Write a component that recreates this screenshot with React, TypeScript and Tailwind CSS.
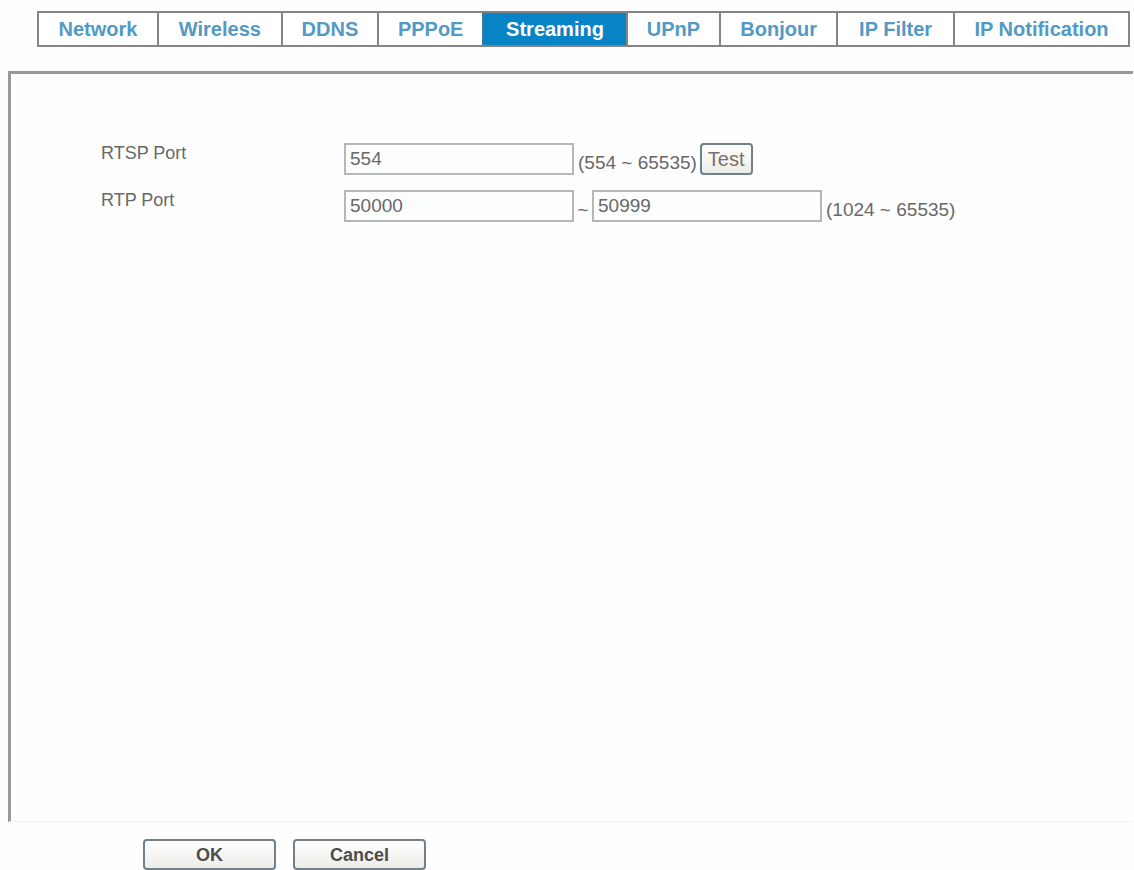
import clsx from 'clsx';

// grow sets each tab's share of the bar
const tabs = [
  { label: 'Network', grow: 'grow-[120]' },
  { label: 'Wireless', grow: 'grow-[124]' },
  { label: 'DDNS', grow: 'grow-[96]' },
  { label: 'PPPoE', grow: 'grow-[105]' },
  { label: 'Streaming', grow: 'grow-[144]', active: true },
  { label: 'UPnP', grow: 'grow-[93]' },
  { label: 'Bonjour', grow: 'grow-[117]' },
  { label: 'IP Filter', grow: 'grow-[117]' },
  { label: 'IP Notification', grow: 'grow-[176]' },
];

const inputClass =
  'h-8 w-[230px] border-2 border-[#b4b8b8] bg-[#fcfefe] px-1 text-[19px] text-[#686868] outline-none';

const buttonClass =
  'rounded-sm border-2 border-[#71808a] bg-gradient-to-b from-white to-[#ecece8]';

function TabBar() {
  return (
    <nav className="ml-[37px] mr-[4px] flex border-2 border-[#858585] bg-white">
      {tabs.map((tab, index) => (
        <a
          key={tab.label}
          href="#"
          aria-current={tab.active ? 'page' : undefined}
          className={clsx(
            'basis-0 whitespace-nowrap text-center text-xl font-bold leading-8',
            tab.grow,
            index > 0 && 'border-l-2',
            tab.active
              ? 'border-[#3f7898] bg-[#0784c6] text-white'
              : 'border-[#858585] text-[#5299c4]',
          )}
        >
          {tab.label}
        </a>
      ))}
    </nav>
  );
}

export default function App() {
  return (
    <div className="flex min-h-screen flex-col bg-[#fefefe] pt-[11px] font-['Liberation_Sans',Arial,sans-serif] text-[#686868]">
      <TabBar />

      <form className="flex flex-1 flex-col">
        {/* Settings panel */}
        <div className="ml-2 mr-px mt-6 flex-1 border-b border-l-3 border-t-3 border-b-[#f3f3f0] border-l-[#9a9a96] border-t-[#9a9a93] pl-[90px] pt-[69px]">
          <div className="flex flex-col gap-[15px]">
            <div className="flex">
              <label htmlFor="rtsp" className="w-[243px] shrink-0 text-lg leading-5">
                RTSP Port
              </label>
              <input id="rtsp" className={inputClass} defaultValue="554" />
              <span className="ml-1 pt-2 text-[19px] leading-6">(554 ~ 65535)</span>
              <button
                type="button"
                className={clsx(buttonClass, 'ml-[3px] h-8 px-1.5 text-xl leading-6 text-[#77716d]')}
              >
                Test
              </button>
            </div>

            <div className="flex">
              <label htmlFor="rtp-start" className="w-[243px] shrink-0 text-lg leading-5">
                RTP Port
              </label>
              <input id="rtp-start" className={inputClass} defaultValue="50000" />
              <span className="w-[18px] pt-2 text-center text-[19px] leading-6">~</span>
              <input aria-label="RTP Port end" className={inputClass} defaultValue="50999" />
              <span className="ml-1 pt-2 text-[19px] leading-6">(1024 ~ 65535)</span>
            </div>
          </div>
        </div>

        {/* Form actions */}
        <div className="ml-[143px] mt-[17px] flex gap-[17px]">
          <button
            type="submit"
            className={clsx(buttonClass, 'h-[31px] w-[133px] text-lg font-bold leading-6 text-[#4c4c4c]')}
          >
            OK
          </button>
          <button
            type="button"
            className={clsx(buttonClass, 'h-[31px] w-[133px] text-lg font-bold leading-6 text-[#4c4c4c]')}
          >
            Cancel
          </button>
        </div>
      </form>
    </div>
  );
}
